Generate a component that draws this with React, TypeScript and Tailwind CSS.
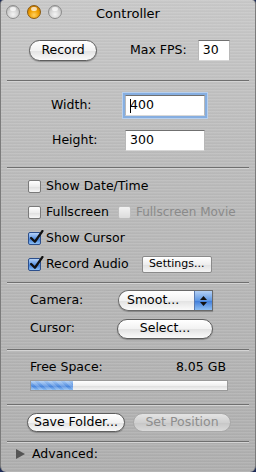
import React from "react";

const font = "font-['DejaVu_Sans',sans-serif]";

function Sep() {
  return (
    <div className="mx-[6px] flex flex-col">
      <div className="h-px bg-[#6f6f6f]" />
      <div className="h-px bg-[#d4d4d4]" />
    </div>
  );
}

function Light({ color }: { color: "gray" | "orange" }) {
  const cls =
    color === "orange"
      ? "bg-[radial-gradient(circle_at_50%_75%,#ffd060_0%,#f0a000_45%,#b86a00_100%)] border-[#8a5a10]"
      : "bg-[radial-gradient(circle_at_50%_70%,#f4f4f4_0%,#d2d2d2_50%,#a8a8a8_100%)] border-[#8c8c8c]";
  return (
    <div className={`relative h-[14px] w-[14px] rounded-full border ${cls}`}>
      <div className="absolute left-[3px] top-[1px] h-[4px] w-[6px] rounded-full bg-white/70" />
    </div>
  );
}

function Pill({
  children,
  w,
  h = "h-[20px]",
  disabled = false,
}: {
  children: React.ReactNode;
  w: string;
  h?: string;
  disabled?: boolean;
}) {
  return (
    <div
      className={`${w} ${h} flex items-center justify-center rounded-full border ${
        disabled
          ? "border-[#a8a8a8] text-[#8e8e8e] bg-[linear-gradient(#e4e4e4,#d0d0d0_50%,#c6c6c6_51%,#dadada)]"
          : "border-[#5e5e5e] text-black bg-[linear-gradient(#ffffff,#f2f2f2_50%,#e2e2e2_51%,#fafafa)] shadow-[0_1px_1px_rgba(0,0,0,0.25)]"
      } text-[12.5px]`}
    >
      {children}
    </div>
  );
}

function Input({ value, focused = false, w }: { value: string; focused?: boolean; w: string }) {
  return (
    <div
      className={`${w} h-[21px] flex items-center bg-white border-t border-t-[#707070] border-x border-x-[#b8b8b8] border-b border-b-[#d8d8d8] pl-[4px] text-[12.5px] text-black ${
        focused ? "shadow-[0_0_0_2px_#86aee0,0_0_0_3px_#b8d0ee]" : ""
      }`}
    >
      {focused && <span className="mr-[-1px] inline-block h-[14px] w-px bg-black" />}
      {value}
    </div>
  );
}

function Check({ checked, disabled }: { checked?: boolean; disabled?: boolean }) {
  return (
    <div
      className={`relative h-[13px] w-[13px] rounded-[2px] border ${
        checked
          ? "border-[#2c4f8c] bg-[linear-gradient(#b6d2f6,#5b95e4_50%,#3a78d6_51%,#8ec0f4)]"
          : disabled
          ? "border-[#bdbdbd] bg-[linear-gradient(#f2f2f2,#dcdcdc)]"
          : "border-[#7a7a7a] bg-[linear-gradient(#ffffff,#ededed_50%,#dedede_51%,#f6f6f6)]"
      }`}
    >
      {checked && (
        <svg viewBox="0 0 14 14" className="absolute left-[0px] top-[-3px] h-[15px] w-[15px]">
          <path d="M2 7.5 L5.5 11 L12.5 1" fill="none" stroke="#111" strokeWidth="2.2" strokeLinecap="round" strokeLinejoin="round" />
        </svg>
      )}
    </div>
  );
}

function CheckRow({
  label,
  checked,
  children,
}: {
  label: string;
  checked?: boolean;
  children?: React.ReactNode;
}) {
  return (
    <div className="flex h-[26px] items-center pl-[27px]">
      <Check checked={checked} />
      <span className="ml-[5px] text-[12.5px] text-black">{label}</span>
      {children}
    </div>
  );
}

export default function App() {
  return (
    <div className={`h-[472px] w-[256px] bg-[#1e2c58] ${font}`}>
      <div className="relative h-[472px] w-[256px] overflow-hidden rounded-b-[6px] rounded-t-[4px] border-x border-[#7c7c7c] bg-[linear-gradient(180deg,#c8c8c8_0%,#bcbcbc_30%,#b6b6b6_60%,#aeaeae_100%)]">
        <div className="pointer-events-none absolute inset-0 bg-[repeating-linear-gradient(180deg,rgba(255,255,255,0.10)_0px,rgba(255,255,255,0.10)_1px,rgba(0,0,0,0.03)_2px,rgba(255,255,255,0)_3px)]" />
        <div className="relative flex flex-col">
          {/* title bar */}
          <div className="relative flex h-[24px] items-center">
            <div className="flex gap-[7px] pl-[5px]">
              <Light color="gray" />
              <Light color="orange" />
              <Light color="gray" />
            </div>
            <div className="absolute inset-x-0 top-[4px] text-center text-[13px] text-black">Controller</div>
          </div>

          {/* section 1 */}
          <div className="flex h-[56px] items-start pt-[16px] pl-[28px]">
            <Pill w="w-[68px]" h="h-[21px]">Record</Pill>
            <div className="ml-[33px] flex h-[21px] items-center text-[12.5px] text-black">Max FPS:</div>
            <div className="ml-[11px]">
              <Input value="30" w="w-[32px]" />
            </div>
          </div>
          <Sep />

          {/* section 2 */}
          <div className="flex h-[85px] flex-col gap-[14px] pt-[13px]">
            <div className="flex h-[21px] items-center">
              <span className="w-[124px] pl-[50px] text-[12.5px] text-black">Width:</span>
              <Input value="400" focused w="w-[80px]" />
            </div>
            <div className="flex h-[21px] items-center">
              <span className="w-[124px] pl-[51px] text-[12.5px] text-black">Height:</span>
              <Input value="300" w="w-[80px]" />
            </div>
          </div>
          <Sep />

          {/* section 3 */}
          <div className="flex h-[113px] flex-col pt-[4px]">
            <CheckRow label="Show Date/Time" />
            <CheckRow label="Fullscreen">
              <div className="ml-[9px]">
                <Check disabled />
              </div>
              <span className="ml-[5px] text-[12px] text-[#8a8a8a]">Fullscreen Movie</span>
            </CheckRow>
            <CheckRow label="Show Cursor" checked />
            <CheckRow label="Record Audio" checked>
              <div className="ml-[13px] flex h-[17px] w-[70px] items-center justify-center rounded-[2px] border border-[#8a8a8a] bg-[linear-gradient(#ffffff,#eeeeee_50%,#e2e2e2_51%,#f4f4f4)] text-[11px] text-black">
                Settings...
              </div>
            </CheckRow>
          </div>
          <Sep />

          {/* section 4 */}
          <div className="flex h-[65px] flex-col gap-[7px] pt-[6px]">
            <div className="flex h-[21px] items-center">
              <span className="w-[117px] pl-[29px] text-[12.5px] text-black">Camera:</span>
              <div className="flex h-[21px] w-[95px] overflow-hidden rounded-l-full rounded-r-[5px] border border-[#6a6a6a] shadow-[0_1px_1px_rgba(0,0,0,0.25)]">
                <div className="flex flex-1 items-center pl-[8px] text-[12.5px] text-black bg-[linear-gradient(#ffffff,#f2f2f2_50%,#e2e2e2_51%,#fafafa)]">
                  Smoot...
                </div>
                <div className="flex w-[18px] flex-col items-center justify-center gap-[2px] border-l border-[#5a7ab0] bg-[linear-gradient(#b4d0f4,#5f98e4_50%,#3d7ad8_51%,#8fc0f4)]">
                  <svg width="7" height="4" viewBox="0 0 7 4"><path d="M0 4 L3.5 0 L7 4 Z" fill="#111" /></svg>
                  <svg width="7" height="4" viewBox="0 0 7 4"><path d="M0 0 L3.5 4 L7 0 Z" fill="#111" /></svg>
                </div>
              </div>
            </div>
            <div className="flex h-[21px] items-center">
              <span className="w-[116px] pl-[29px] text-[12.5px] text-black">Cursor:</span>
              <Pill w="w-[96px]">Select...</Pill>
            </div>
          </div>
          <Sep />

          {/* section 5 */}
          <div className="flex h-[53px] flex-col pt-[8px] pl-[29px] pr-[29px]">
            <div className="flex h-[16px] items-center justify-between text-[12.5px] text-black">
              <span>Free Space:</span>
              <span>8.05 GB</span>
            </div>
            <div className="mt-[5px] h-[11px] w-[198px] overflow-hidden border border-[#9a9a9a] bg-[linear-gradient(#ffffff,#f0f0f0_50%,#dcdcdc_51%,#f4f4f4)]">
              <div className="h-full w-[42px] bg-[linear-gradient(#a8caf4,#5b94e2_50%,#3b7ad8_51%,#8ebef2)]">
                <div className="h-full w-full bg-[repeating-linear-gradient(45deg,rgba(255,255,255,0.18)_0px,rgba(255,255,255,0.18)_3px,rgba(255,255,255,0)_3px,rgba(255,255,255,0)_6px)]" />
              </div>
            </div>
          </div>
          <Sep />

          {/* section 6 */}
          <div className="flex h-[35px] items-start gap-[8px] pt-[7px] pl-[26px]">
            <Pill w="w-[98px]" h="h-[19px]">Save Folder...</Pill>
            <Pill w="w-[98px]" h="h-[19px]" disabled>Set Position</Pill>
          </div>
          <Sep />

          {/* advanced */}
          <div className="flex h-[22px] items-center pl-[15px]">
            <svg width="9" height="10" viewBox="0 0 9 10"><path d="M0 0 L9 5 L0 10 Z" fill="#555" /></svg>
            <span className="ml-[7px] text-[12.5px] text-black">Advanced:</span>
          </div>
        </div>
      </div>
    </div>
  );
}
